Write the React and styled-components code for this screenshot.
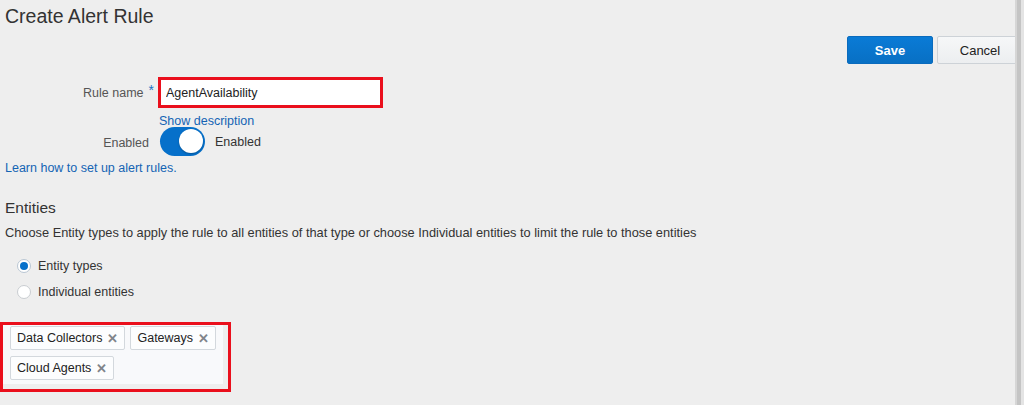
import React, { useState } from "react";
import styled, { createGlobalStyle } from "styled-components";

const GlobalStyle = createGlobalStyle`
  html, body {
    margin: 0;
    padding: 0;
    background: #eeeeee;
  }
  body {
    font-family: "Liberation Sans", Arial, sans-serif;
    color: #333;
  }
`;

const Shell = styled.div`
  display: flex;
  width: 1024px;
  height: 405px;
  overflow: hidden;
`;

const Main = styled.div`
  flex: 1;
  min-width: 0;
  overflow: hidden;
  padding-left: 5px;
`;

const Edge = styled.div`
  width: 7px;
  flex-shrink: 0;
  background: #e4e4e4;
  border-left: 2px solid #d6d6d6;
  box-shadow: inset 1px 0 0 #c4c4c4, inset 4px 0 0 #c4c4c4;
`;

const Title = styled.h1`
  margin: 4px 0 0;
  font-size: 19.5px;
  line-height: 24px;
  font-weight: 400;
  color: #333;
`;

const Actions = styled.div`
  display: flex;
  justify-content: flex-end;
  gap: 4px;
  margin-top: 8px;
  margin-right: -8px;
`;

const Button = styled.button`
  height: 28px;
  width: 86px;
  padding: 0;
  font-family: "Liberation Sans", Arial, sans-serif;
  font-size: 13px;
  font-weight: ${(p) => (p.primary ? 700 : 400)};
  border-radius: 2px;
  border: 1px solid ${(p) => (p.primary ? "#0a6bbd" : "#cdd2d7")};
  background: ${(p) =>
    p.primary
      ? "linear-gradient(#0a7bd6, #0870c4)"
      : "linear-gradient(#f6f7f8, #eceef0)"};
  color: ${(p) => (p.primary ? "#fff" : "#222")};
`;

const Form = styled.div`
  display: grid;
  grid-template-columns: 153px 230px;
  align-items: center;
  margin-top: 13px;
`;

const Label = styled.div`
  font-size: 12.5px;
  color: #555;
  display: flex;
  justify-content: flex-end;
  align-items: center;
  gap: 5px;
  padding-right: ${(p) => (p.required ? "4px" : "9px")};
`;

const Required = styled.span`
  color: #1a73c4;
  font-size: 14px;
  line-height: 1;
  align-self: flex-start;
  margin-top: -3px;
`;

const Input = styled.input`
  box-sizing: border-box;
  width: 225px;
  height: 31px;
  border: 3px solid #ea0f1c;
  background: #fff;
  padding: 0 5px;
  font-family: "Liberation Sans", Arial, sans-serif;
  font-size: 12.5px;
  color: #222;
  outline: none;
`;

const Link = styled.a`
  color: #1464b4;
  font-size: 12.5px;
  text-decoration: none;
  cursor: pointer;
`;

const DescLink = styled(Link)`
  grid-column: 2;
  padding-left: 1px;
  margin-top: 5px;
  line-height: 16px;
`;

const ToggleRow = styled.div`
  display: flex;
  align-items: center;
  gap: 10px;
  font-size: 12.5px;
  color: #333;
  padding-left: 2px;
  margin-top: -2px;
`;

const Track = styled.button`
  position: relative;
  width: 45px;
  height: 29px;
  padding: 0;
  border: none;
  border-radius: 15px;
  background: ${(p) => (p.on ? "#0670ca" : "#b8bcc0")};
  cursor: pointer;
`;

const Knob = styled.span`
  position: absolute;
  top: 2px;
  left: ${(p) => (p.on ? "19px" : "2px")};
  width: 24px;
  height: 24px;
  border-radius: 50%;
  background: #fff;
  box-shadow: 0 1px 2px rgba(0, 0, 0, 0.25);
`;

const LearnLink = styled(Link)`
  display: block;
  margin-top: 4px;
  line-height: 16px;
`;

const Section = styled.section`
  margin-top: 22px;
`;

const SectionTitle = styled.h2`
  margin: 0;
  font-size: 15.5px;
  line-height: 20px;
  font-weight: 400;
  color: #333;
`;

const Hint = styled.p`
  margin: 7px 0 0;
  font-size: 12.8px;
  line-height: 16px;
  color: #333;
`;

const Radios = styled.div`
  display: flex;
  flex-direction: column;
  gap: 8px;
  margin-top: 16px;
  padding-left: 12px;
`;

const RadioRow = styled.label`
  display: flex;
  align-items: center;
  gap: 7px;
  font-size: 12.5px;
  color: #333;
  line-height: 18px;
`;

const RadioDot = styled.span`
  box-sizing: border-box;
  width: 14px;
  height: 14px;
  border-radius: 50%;
  background: #fff;
  border: 1px solid ${(p) => (p.checked ? "#b9c6d3" : "#c9cdd1")};
  display: flex;
  align-items: center;
  justify-content: center;

  &::after {
    content: "";
    width: 8px;
    height: 8px;
    border-radius: 50%;
    background: ${(p) => (p.checked ? "#0670ca" : "transparent")};
  }
`;

const Highlight = styled.div`
  box-sizing: border-box;
  width: 231px;
  margin: 21px 0 0 -5px;
  border: 3px solid #ea0f1c;
  padding: 0 5px 5px 0;
  background: #eeeeee;
`;

const TagBox = styled.div`
  box-sizing: border-box;
  height: 59px;
  background: #f8f9fb;
  display: flex;
  flex-wrap: wrap;
  gap: 6px 5px;
  padding: 1px 4px 0 7px;
  align-content: flex-start;
`;

const Tag = styled.span`
  box-sizing: border-box;
  height: 24px;
  display: inline-flex;
  align-items: center;
  gap: 5px;
  padding: 0 6px 0 6px;
  background: #fcfdfe;
  border: 1px solid #d3d8dd;
  border-radius: 2px;
  font-size: 12.5px;
  color: #222;
`;

const Remove = styled.span`
  color: #80848a;
  font-size: 13px;
  font-weight: 700;
  line-height: 1;
`;

const tags = ["Data Collectors", "Gateways", "Cloud Agents"];

const App = () => {
  const [enabled, setEnabled] = useState(true);
  const [mode, setMode] = useState("types");

  return (
    <Shell>
      <GlobalStyle />
      <Main>
        <Title>Create Alert Rule</Title>
        <Actions>
          <Button primary>Save</Button>
          <Button>Cancel</Button>
        </Actions>

        <Form>
          <Label required>
            Rule name <Required>*</Required>
          </Label>
          <Input defaultValue="AgentAvailability" />
          <DescLink>Show description</DescLink>
          <Label>Enabled</Label>
          <ToggleRow>
            <Track on={enabled ? 1 : 0} onClick={() => setEnabled(!enabled)}>
              <Knob on={enabled ? 1 : 0} />
            </Track>
            {enabled ? "Enabled" : "Disabled"}
          </ToggleRow>
        </Form>
        <LearnLink>Learn how to set up alert rules.</LearnLink>

        <Section>
          <SectionTitle>Entities</SectionTitle>
          <Hint>
            Choose Entity types to apply the rule to all entities of that type
            or choose Individual entities to limit the rule to those entities
          </Hint>
          <Radios>
            <RadioRow onClick={() => setMode("types")}>
              <RadioDot checked={mode === "types"} />
              Entity types
            </RadioRow>
            <RadioRow onClick={() => setMode("individual")}>
              <RadioDot checked={mode === "individual"} />
              Individual entities
            </RadioRow>
          </Radios>
          <Highlight>
            <TagBox>
              {tags.map((t) => (
                <Tag key={t}>
                  {t}
                  <Remove>✕</Remove>
                </Tag>
              ))}
            </TagBox>
          </Highlight>
        </Section>
      </Main>
      <Edge />
    </Shell>
  );
};

export default App;
